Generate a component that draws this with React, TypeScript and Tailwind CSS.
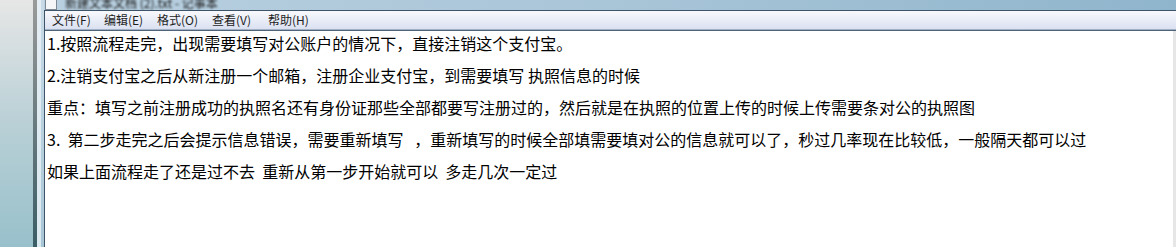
import React from "react";

const lines = [
  "1.按照流程走完，出现需要填写对公账户的情况下，直接注销这个支付宝。",
  "2.注销支付宝之后从新注册一个邮箱，注册企业支付宝，到需要填写 执照信息的时候",
  "重点：填写之前注册成功的执照名还有身份证那些全部都要写注册过的，然后就是在执照的位置上传的时候上传需要条对公的执照图",
  "3.  第二步走完之后会提示信息错误，需要重新填写   ，重新填写的时候全部填需要填对公的信息就可以了，秒过几率现在比较低，一般隔天都可以过",
  "如果上面流程走了还是过不去  重新从第一步开始就可以  多走几次一定过",
];

const menus = [
  ["文件(F)", "w-[52px]"],
  ["编辑(E)", "w-[53px]"],
  ["格式(O)", "w-[55px]"],
  ["查看(V)", "w-[56px]"],
  ["帮助(H)", "w-[50px]"],
];

export default function App() {
  return (
    <div className="flex w-[1176px] h-[247px] overflow-hidden bg-[#9fc3cd]">
      {/* desktop strip */}
      <div className="w-[33px] h-full bg-gradient-to-b from-[#e6e6e6] via-[#b9d0d6] to-[#98c0cb]" />
      <div className="w-[4px] h-full bg-gradient-to-b from-[#9a9a9a] to-[#3a5d66]" />
      {/* window frame left */}
      <div className="w-[4px] h-full bg-gradient-to-b from-[#e4edf3] to-[#dbe9f0]" />
      <div className="w-[3px] h-full bg-gradient-to-b from-[#c9dbe7] to-[#a9c6d6]" />
      {/* window */}
      <div className="flex flex-col flex-1 h-full">
        {/* title bar */}
        <div className="h-[10px] flex items-end overflow-hidden bg-gradient-to-r from-[#b9d0e0] via-[#a9c5d8] to-[#8fb5cc]">
          <div className="flex items-end gap-[8px] pl-[1px]">
            <div className="w-[12px] h-[14px] border border-[#7d8a96] bg-[#f4f6f8]" />
            <div
              className="text-[12px] leading-[14px] text-[#1b1b1b] blur-[1px]"
              style={{ fontFamily: '"Noto Sans CJK SC", sans-serif' }}
            >
              新建文本文档 (2).txt - 记事本
            </div>
          </div>
        </div>
        {/* inner */}
        <div className="flex-1 flex flex-col border-l border-t border-[#3d5468] bg-white min-h-0">
          {/* menu bar */}
          <div
            className="h-[19px] flex items-center pl-[7px] bg-gradient-to-b from-[#f8f9fd] to-[#dbe1f1] border-b border-[#a3b1c6] text-[12px] text-[#1e1e1e]"
            style={{ fontFamily: '"Noto Sans CJK SC", sans-serif' }}
          >
            {menus.map(([m, w]) => (
              <div key={m} className={`${w} leading-[16px]`}>
                {m}
              </div>
            ))}
          </div>
          <div className="h-[1px] bg-[#4f6478]" />
          {/* content */}
          <div className="flex-1 flex min-h-0">
            <div
              className="flex-1 flex flex-col gap-[8px] pl-[2px] text-[16px] leading-[24px] text-black whitespace-pre"
              style={{ fontFamily: '"Noto Sans CJK SC", "SimSun", sans-serif' }}
            >
              {lines.map((l, i) => (
                <div key={i}>{l}</div>
              ))}
            </div>
            <div className="w-[3px] h-full bg-[#e6e6e6]" />
          </div>
        </div>
      </div>
    </div>
  );
}
